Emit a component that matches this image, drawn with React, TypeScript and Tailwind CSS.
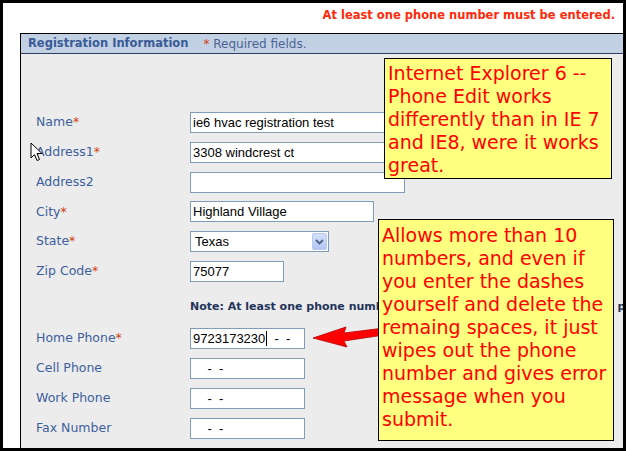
const label = 'font-["DejaVu_Sans",sans-serif] text-[12.5px] text-[#3d5e9e]';
const input = 'h-[21px] border border-[#7f9db9] bg-white pl-[2px] flex items-center font-["Liberation_Sans",Arial,sans-serif] text-[13px] text-black whitespace-pre';

const Star = () => <span className="text-[#d2400e]">*</span>;

const Row = ({ name, req, children }: { name: string; req?: boolean; children: React.ReactNode }) => (
  <div className="grid grid-cols-[154px_1fr] items-center">
    <div className={label}>
      {name}
      {req && <Star />}
    </div>
    {children}
  </div>
);

const Cursor = () => (
  <svg className="absolute left-[27px] top-[139px]" width="13" height="20" viewBox="0 0 13 20">
    <path d="M1 1 L1 16 L4.5 12.5 L7 18.5 L9.5 17.5 L7 11.5 L12 11.5 Z" fill="white" stroke="black" strokeWidth="1" strokeLinejoin="miter" />
  </svg>
);

const Arrow = () => (
  <svg className="absolute left-[307px] top-[319px]" width="75" height="30" viewBox="0 0 75 30">
    <path d="M3 16 L36 5 L34 11 L74 6 L74 13 L34 19 L37 25 Z" fill="#ff0000" stroke="#b40000" strokeWidth="0.8" strokeLinejoin="round" />
  </svg>
);

export default function App() {
  return (
    <div className="relative w-[626px] h-[451px] overflow-hidden border-[3px] border-black bg-white">
      <div className="h-[30px] pt-[5px] pr-[8px] flex justify-end">
        <span className='font-["DejaVu_Sans",sans-serif] font-bold text-[11.5px] leading-[14px] text-[#ff2a0a]'>
          At least one phone number must be entered.
        </span>
      </div>

      <div className="ml-[17px] w-[620px] h-[420px] border-l border-t border-black flex flex-col">
        <div className='h-[20px] shrink-0 bg-[#c1d0e2] border-b border-[#2d3f63] pl-[7px] flex items-center font-["DejaVu_Sans",sans-serif]'>
          <span className="font-bold text-[11.5px] text-[#3a5b98]">Registration Information</span>
          <span className="ml-[15px] text-[12px] text-[#4b6496]">
            <Star /> Required fields.
          </span>
        </div>

        <div className="flex-1 bg-[#ececec] pl-[15px] pt-[58px]">
          <div className="flex flex-col gap-[8.8px]">
            <Row name="Name" req>
              <div className={`${input} w-[215px]`}>ie6 hvac registration test</div>
            </Row>
            <Row name="Address1" req>
              <div className={`${input} w-[215px]`}>3308 windcrest ct</div>
            </Row>
            <Row name="Address2">
              <div className={`${input} w-[215px]`}></div>
            </Row>
            <Row name="City" req>
              <div className={`${input} w-[184px]`}>Highland Village</div>
            </Row>
            <Row name="State" req>
              <div className={`${input} w-[139px] justify-between pl-[4px] pr-[1px]`}>
                <span>Texas</span>
                <span className="w-[15px] h-[17px] rounded-[2px] border border-[#b7c9f3] bg-gradient-to-b from-[#d4e0fd] to-[#b2c5f3] flex items-center justify-center">
                  <svg width="9" height="6" viewBox="0 0 9 6">
                    <path d="M1 1 L4.5 4.5 L8 1" fill="none" stroke="#4d6185" strokeWidth="1.8" />
                  </svg>
                </span>
              </div>
            </Row>
            <Row name="Zip Code" req>
              <div className={`${input} w-[94px]`}>75077</div>
            </Row>
          </div>

          <div className='mt-[18px] pl-[154px] h-[14px] leading-[14px] whitespace-nowrap overflow-hidden font-["DejaVu_Sans",sans-serif] font-bold text-[11px] text-[#23345a]'>
            Note: At least one phone number must be entered. Please enter the phone in
          </div>

          <div className="mt-[14px] flex flex-col gap-[9px]">
            <Row name="Home Phone" req>
              <div className={`${input} w-[115px] bg-[#ffffd2]`}>
                9723173230<span className="inline-block w-px h-[15px] bg-black ml-px" />{'  -  -'}
              </div>
            </Row>
            <Row name="Cell Phone">
              <div className={`${input} w-[115px]`}>{'    -  -'}</div>
            </Row>
            <Row name="Work Phone">
              <div className={`${input} w-[115px]`}>{'    -  -'}</div>
            </Row>
            <Row name="Fax Number">
              <div className={`${input} w-[115px]`}>{'    -  -'}</div>
            </Row>
          </div>
        </div>
      </div>

      <Cursor />
      <Arrow />

      <div className='absolute left-[381px] top-[55px] w-[228px] h-[121px] border border-black bg-[#ffff80] pl-[3px] pt-[3px] font-["DejaVu_Sans",sans-serif] text-[19px] leading-[23px] text-[#ff0000] whitespace-nowrap'>
        Internet Explorer 6 --<br />
        Phone Edit works<br />
        differently than in IE 7<br />
        and IE8, were it works<br />
        great.
      </div>

      <div className='absolute left-[375px] top-[216px] w-[236px] h-[222px] border border-black bg-[#ffff80] pl-[3px] pt-[4px] font-["DejaVu_Sans",sans-serif] text-[19px] leading-[23px] text-[#ff0000] whitespace-nowrap'>
        Allows more than 10<br />
        numbers, and even if<br />
        you enter the dashes<br />
        yourself and delete the<br />
        remaing spaces, it just<br />
        wipes out the phone<br />
        number and gives error<br />
        message when you<br />
        submit.
      </div>
    </div>
  );
}
